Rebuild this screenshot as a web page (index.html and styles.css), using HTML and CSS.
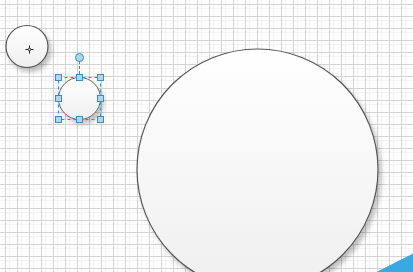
FILE: index.html
```html
<!DOCTYPE html>
<html>
<head>
<meta charset="utf-8">
<link rel="stylesheet" href="styles.css">
</head>
<body>
<div class="canvas">
  <svg class="diagram" width="413" height="272" viewBox="0 0 413 272" xmlns="http://www.w3.org/2000/svg">
    <defs>
      <linearGradient id="fill" x1="0" y1="0" x2="0" y2="1">
        <stop offset="0" stop-color="#ffffff"/>
        <stop offset="1" stop-color="#efefef"/>
      </linearGradient>
      <filter id="shadow" x="-20%" y="-20%" width="140%" height="140%">
        <feGaussianBlur in="SourceAlpha" stdDeviation="2.5"/>
        <feOffset dx="3" dy="4" result="b"/>
        <feComponentTransfer><feFuncA type="linear" slope="0.25"/></feComponentTransfer>
        <feMerge><feMergeNode/><feMergeNode in="SourceGraphic"/></feMerge>
      </filter>
    </defs>

    <!-- small circle top-left -->
    <circle cx="27" cy="46.5" r="21" fill="url(#fill)" stroke="#555" stroke-width="1.2" filter="url(#shadow)"/>
    <g stroke="#222" stroke-width="1" fill="none">
      <line x1="25.5" y1="49.5" x2="33.5" y2="49.5"/>
      <line x1="29.5" y1="45.5" x2="29.5" y2="53.5"/>
      <circle cx="29.5" cy="49.5" r="1.3" fill="#fff"/>
    </g>

    <!-- selected circle -->
    <circle cx="79.5" cy="98.5" r="21" fill="url(#fill)" stroke="#666" stroke-width="1" filter="url(#shadow)"/>
    <rect x="58.5" y="77.5" width="42" height="42" fill="none" stroke="#3c8dbf" stroke-width="1" stroke-dasharray="3,3"/>
    <line x1="79.5" y1="61" x2="79.5" y2="77" stroke="#3c8dbf" stroke-width="1" stroke-dasharray="3,2"/>
    <circle cx="79.5" cy="57.5" r="4" fill="#a9d9ef" stroke="#3c8dbf" stroke-width="1"/>
    <g fill="#a9d9ef" stroke="#3c8dbf" stroke-width="1">
      <rect x="55.5" y="74.5" width="6" height="6"/>
      <rect x="76.5" y="74.5" width="6" height="6"/>
      <rect x="97.5" y="74.5" width="6" height="6"/>
      <rect x="55.5" y="95.5" width="6" height="6"/>
      <rect x="97.5" y="95.5" width="6" height="6"/>
      <rect x="55.5" y="116.5" width="6" height="6"/>
      <rect x="76.5" y="116.5" width="6" height="6"/>
      <rect x="97.5" y="116.5" width="6" height="6"/>
    </g>

    <!-- big circle -->
    <circle cx="257.5" cy="169.5" r="120.5" fill="url(#fill)" stroke="#555" stroke-width="1.2" filter="url(#shadow)"/>

    <!-- blue corner -->
    <polygon points="376.5,272 413,253.5 413,272" fill="#3aa9e1"/>
  </svg>
</div>
</body>
</html>
```
FILE: styles.css
```css
html, body {
  margin: 0;
  padding: 0;
  width: 413px;
  height: 272px;
  overflow: hidden;
  background: #ffffff;
}

.canvas {
  position: relative;
  width: 413px;
  height: 272px;
  background-color: #ffffff;
  background-image:
    linear-gradient(to right, #d4d4d4 1px, transparent 1px),
    linear-gradient(to bottom, #d4d4d4 1px, transparent 1px),
    linear-gradient(to right, #f3f3f3 1px, transparent 1px),
    linear-gradient(to bottom, #f3f3f3 1px, transparent 1px);
  background-size: 12px 12px, 12px 12px, 12px 12px, 12px 12px;
  background-position: 5px 4px, 5px 4px, 9px 8px, 9px 8px;
}

.diagram {
  display: block;
}
```
